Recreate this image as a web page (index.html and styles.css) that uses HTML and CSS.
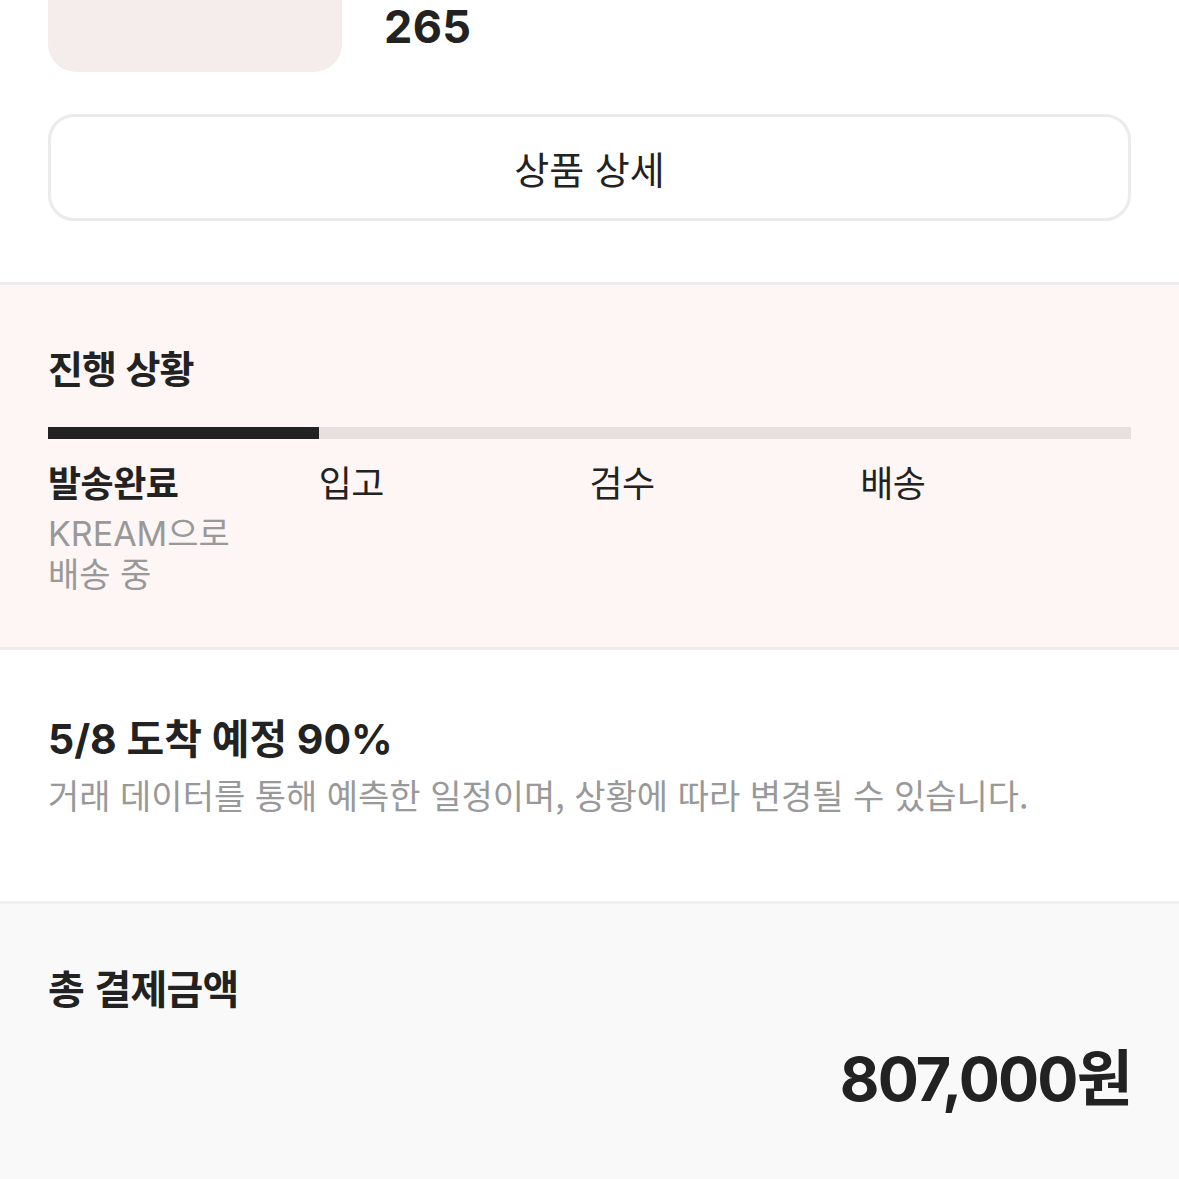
FILE: index.html
```html
<!DOCTYPE html>
<html lang="ko">
<head>
  <meta charset="UTF-8" />
  <meta name="viewport" content="width=device-width, initial-scale=1.0"/>
  <title>KREAM - 판매 내역</title>
  <link rel="stylesheet" href="styles.css">
</head>
<body>
  <div class="page">
    <div class="inner">
      <div class="product">
        <div class="product-img"></div>
        <div class="product-info">
          <span class="size">265</span>
        </div>
      </div>
      <button class="detail-btn">상품 상세</button>
    </div>

    <section class="progress">
      <h2>진행 상황</h2>
      <div class="bar">
        <div class="bar-fill" style="width: 25%"></div>
      </div>
      <div class="steps">
        <div class="step active">
          <p class="step-name">발송완료</p>
          <p class="step-desc">KREAM으로<br>배송 중</p>
        </div>
        <div class="step"><p class="step-name">입고</p></div>
        <div class="step"><p class="step-name">검수</p></div>
        <div class="step"><p class="step-name">배송</p></div>
      </div>
    </section>

    <section class="arrival">
      <h3>5/8 도착 예정 90%</h3>
      <p>거래 데이터를 통해 예측한 일정이며, 상황에 따라 변경될 수 있습니다.</p>
    </section>

    <section class="total">
      <h3>총 결제금액</h3>
      <div class="price">807,000원</div>
    </section>
  </div>
</body>
</html>
```

FILE: styles.css
```css
body {
  margin: 0;
  font-family: 'Inter', 'Noto Sans CJK KR', sans-serif;
  color: #222;
  background: #f9f9f9;
  overflow: hidden;
}
.page {
  width: 1179px;
}
.inner {
  background: #fff;
  padding: 0 48px 61px;
}
.product {
  display: flex;
  gap: 42px;
  margin-top: -222px;
}
.product-img {
  width: 294px;
  height: 294px;
  background-color: #f4edeb;
  border-radius: 28px;
  flex-shrink: 0;
}
.product-info {
  display: flex;
  flex-direction: column;
  justify-content: flex-end;
  padding-bottom: 23px;
}
.size {
  font-size: 45px;
  font-weight: 700;
  line-height: 1;
  letter-spacing: 0.3px;
}
.detail-btn {
  display: block;
  width: 100%;
  height: 107px;
  margin-top: 42px;
  background: #fff;
  border: 3px solid #ebebeb;
  border-radius: 26px;
  font-family: 'Noto Sans CJK KR', sans-serif;
  font-size: 38px;
  color: #222;
  cursor: pointer;
}
.progress {
  background-color: #fdf6f5;
  border-top: 3px solid #ececec;
  border-bottom: 3px solid #ececec;
  padding: 56px 48px 52px;
}
.progress h2 {
  margin: 0;
  font-family: 'Noto Sans CJK KR', sans-serif;
  font-size: 38px;
  font-weight: 700;
  line-height: 52px;
  letter-spacing: -1px;
}
.bar {
  height: 12px;
  background-color: #e6e1de;
  margin-top: 34px;
}
.bar-fill {
  height: 100%;
  background-color: #222;
}
.steps {
  display: grid;
  grid-template-columns: repeat(4, 1fr);
  margin-top: 16px;
}
.step p {
  margin: 0;
  font-family: 'Noto Sans CJK KR', sans-serif;
}
.step-name {
  font-size: 36px;
  line-height: 52px;
  letter-spacing: -0.5px;
}
.step.active .step-name {
  font-weight: 700;
}
.step .step-desc {
  font-family: 'Inter', 'Noto Sans CJK KR', sans-serif;
  font-size: 34px;
  line-height: 41px;
  color: #999;
}
.step.active .step-desc {
  margin-top: 6px;
}
.arrival {
  background: #fff;
  padding: 63px 48px 83px;
  border-bottom: 3px solid #f0f0f0;
}
.arrival h3 {
  margin: 0;
  font-family: 'Inter', 'Noto Sans CJK KR', sans-serif;
  font-size: 41px;
  font-weight: 700;
  line-height: 52px;
}
.arrival p {
  margin: 7px 0 0;
  font-family: 'Noto Sans CJK KR', sans-serif;
  font-size: 34px;
  line-height: 46px;
  color: #999;
}
.total {
  padding: 55px 48px 60px;
}
.total h3 {
  margin: 0;
  font-family: 'Noto Sans CJK KR', sans-serif;
  font-size: 40px;
  font-weight: 700;
  line-height: 56px;
  letter-spacing: -0.8px;
}
.price {
  text-align: right;
  margin-top: 28px;
  font-family: 'Inter', 'Noto Sans CJK KR', sans-serif;
  font-size: 61px;
  font-weight: 700;
  line-height: 72px;
  letter-spacing: -1.8px;
}
```
